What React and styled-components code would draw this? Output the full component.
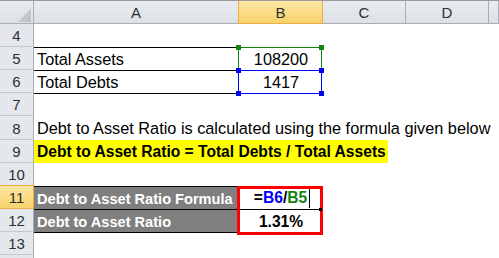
import React from 'react';
import styled, { createGlobalStyle, css } from 'styled-components';

const Global = createGlobalStyle`
  html, body { margin: 0; padding: 0; background: #fff; overflow: hidden; }
  body { font-family: "Liberation Sans", Arial, sans-serif; }
  * { box-sizing: border-box; }
`;

const COLS = '34px 205px 84px 83px 83px 1fr';

const Sheet = styled.div`
  width: 499px;
  height: 258px;
  overflow: hidden;
  background: #fff;
`;

const Row = styled.div`
  display: grid;
  grid-template-columns: ${COLS};
  height: ${(p) => p.$h}px;
`;

const HeaderRow = styled(Row)`
  border-top: 1px solid #9a9a9a;
`;

const Corner = styled.div`
  position: relative;
  background: linear-gradient(#e8ebef, #dde1e6);
  border-right: 1px solid #a9aeb4;
  border-bottom: 1px solid #a9aeb4;
  &::after {
    content: '';
    position: absolute;
    left: 18px;
    top: 7px;
    width: 13px;
    height: 14px;
    background: linear-gradient(135deg, #d3d7dc, #b9bec5);
    clip-path: polygon(100% 0, 100% 100%, 0 100%);
  }
`;

const activeHead = css`
  background: linear-gradient(#fde6a2, #f8d36d);
  border-color: #e9ae3f;
`;

const ColHead = styled.div`
  display: flex;
  align-items: center;
  justify-content: center;
  padding-top: 1px;
  font-size: 15px;
  color: #2b2f36;
  background: linear-gradient(#e8ebef, #dde1e6);
  border-right: 1px solid #a9aeb4;
  border-bottom: 1px solid #a9aeb4;
  ${(p) => p.$active && activeHead}
  ${(p) => p.$active && css`box-shadow: -1px 0 0 #e9ae3f;`}
`;

const RowHead = styled.div`
  display: flex;
  align-items: center;
  justify-content: center;
  padding-top: 1px;
  font-size: 15px;
  color: #2b2f36;
  background: #e4e8ec;
  border-right: 1px solid #a9aeb4;
  border-bottom: 1px solid #c4c9cf;
  ${(p) => p.$active && activeHead}
  ${(p) => p.$active && css`box-shadow: 0 -1px 0 #e9ae3f;`}
`;

const Cell = styled.div`
  position: relative;
  display: flex;
  align-items: center;
  justify-content: ${(p) => (p.$center ? 'center' : 'flex-start')};
  padding: ${(p) => (p.$flush ? '0' : '1px 3px 0')};
  grid-column: span ${(p) => p.$span || 1};
  font-size: ${(p) => p.$size || (p.$bold ? '15.2px' : '16.3px')};
  font-weight: ${(p) => (p.$bold ? 700 : 400)};
  color: ${(p) => p.$color || '#000'};
  background: ${(p) => p.$bg || 'transparent'};
  border-top: ${(p) => (p.$bt ? `1px solid ${p.$bt}` : 'none')};
  white-space: nowrap;
`;

const Highlight = styled.span`
  align-self: stretch;
  display: flex;
  align-items: center;
  padding: 1px 2px 0 3px;
  background: #ffff00;
`;

const RangeBox = styled.div`
  position: absolute;
  left: -1px;
  top: 0;
  width: 84px;
  height: 24px;
  border: 1px solid ${(p) => p.$c};
  z-index: ${(p) => p.$z || 1};
  pointer-events: none;
`;

const Handle = styled.span`
  position: absolute;
  width: 5px;
  height: 5px;
  background: ${(p) => p.$c};
  ${(p) => (p.$y === 't' ? 'top: -3px;' : 'bottom: -3px;')}
  ${(p) => (p.$x === 'l' ? 'left: -3px;' : 'right: -3px;')}
`;

const RedBox = styled.div`
  position: absolute;
  left: -2px;
  top: 0;
  width: 86px;
  height: 49px;
  border: 3px solid #ff0000;
  z-index: 3;
  pointer-events: none;
`;

const FillDot = styled.span`
  position: absolute;
  right: 1px;
  bottom: -2px;
  width: 3px;
  height: 3px;
  background: #000;
  z-index: 4;
`;

const Ref = styled.span`
  color: ${(p) => p.$c};
`;

const Caret = styled.span`
  display: inline-block;
  width: 1px;
  height: 20px;
  margin-left: 2px;
  background: #000;
`;

const Formula = styled.span`
  display: flex;
  align-items: center;
  margin-left: 2px;
`;

const ROW_HEIGHTS = {
  4: 23, 5: 23, 6: 23, 7: 23, 8: 24, 9: 23, 10: 23, 11: 23, 12: 23, 13: 23, 14: 23,
};

function EmptyCells({ n }) {
  return Array.from({ length: n }, (_, i) => <Cell key={i} />);
}

export default function App() {
  return (
    <>
      <Global />
      <Sheet>
        <HeaderRow $h={24}>
          <Corner />
          <ColHead>A</ColHead>
          <ColHead $active>B</ColHead>
          <ColHead>C</ColHead>
          <ColHead>D</ColHead>
          <ColHead />
        </HeaderRow>

        <Row $h={ROW_HEIGHTS[4]}>
          <RowHead>4</RowHead>
          <EmptyCells n={5} />
        </Row>

        <Row $h={ROW_HEIGHTS[5]}>
          <RowHead>5</RowHead>
          <Cell $bt="#000">Total Assets</Cell>
          <Cell $center>
            108200
            <RangeBox $c="#118411">
              <Handle $c="#118411" $y="t" $x="l" />
              <Handle $c="#118411" $y="t" $x="r" />
            </RangeBox>
          </Cell>
          <EmptyCells n={3} />
        </Row>

        <Row $h={ROW_HEIGHTS[6]}>
          <RowHead>6</RowHead>
          <Cell $bt="#000">Total Debts</Cell>
          <Cell $center>
            1417
            <RangeBox $c="#0000ff" $z={2}>
              <Handle $c="#0000ff" $y="t" $x="l" />
              <Handle $c="#0000ff" $y="t" $x="r" />
              <Handle $c="#0000ff" $y="b" $x="l" />
              <Handle $c="#0000ff" $y="b" $x="r" />
            </RangeBox>
          </Cell>
          <EmptyCells n={3} />
        </Row>

        <Row $h={ROW_HEIGHTS[7]}>
          <RowHead>7</RowHead>
          <Cell $bt="#000" />
          <EmptyCells n={4} />
        </Row>

        <Row $h={ROW_HEIGHTS[8]}>
          <RowHead>8</RowHead>
          <Cell $span={5}>Debt to Asset Ratio is calculated using the formula given below</Cell>
        </Row>

        <Row $h={ROW_HEIGHTS[9]}>
          <RowHead>9</RowHead>
          <Cell $span={5} $flush $bold $size="15.6px">
            <Highlight>Debt to Asset Ratio = Total Debts / Total Assets</Highlight>
          </Cell>
        </Row>

        <Row $h={ROW_HEIGHTS[10]}>
          <RowHead>10</RowHead>
          <EmptyCells n={5} />
        </Row>

        <Row $h={ROW_HEIGHTS[11]}>
          <RowHead $active>11</RowHead>
          <Cell $bt="#000" $bg="#7f7f7f" $color="#fff" $bold $size="14.6px">
            Debt to Asset Ratio Formula
          </Cell>
          <Cell $bold $center $size="15.6px">
            <Formula>
              =<Ref $c="#0000ff">B6</Ref>/<Ref $c="#118411">B5</Ref>
              <Caret />
            </Formula>
            <RedBox />
            <FillDot />
          </Cell>
          <EmptyCells n={3} />
        </Row>

        <Row $h={ROW_HEIGHTS[12]}>
          <RowHead>12</RowHead>
          <Cell $bt="#000" $bg="#7f7f7f" $color="#fff" $bold $size="14.6px">
            Debt to Asset Ratio
          </Cell>
          <Cell $bt="#000" $bold $center $size="15.6px">
            1.31%
          </Cell>
          <EmptyCells n={3} />
        </Row>

        <Row $h={ROW_HEIGHTS[13]}>
          <RowHead>13</RowHead>
          <Cell $bt="#000" />
          <EmptyCells n={4} />
        </Row>

        <Row $h={ROW_HEIGHTS[14]}>
          <RowHead />
          <EmptyCells n={5} />
        </Row>
      </Sheet>
    </>
  );
}
